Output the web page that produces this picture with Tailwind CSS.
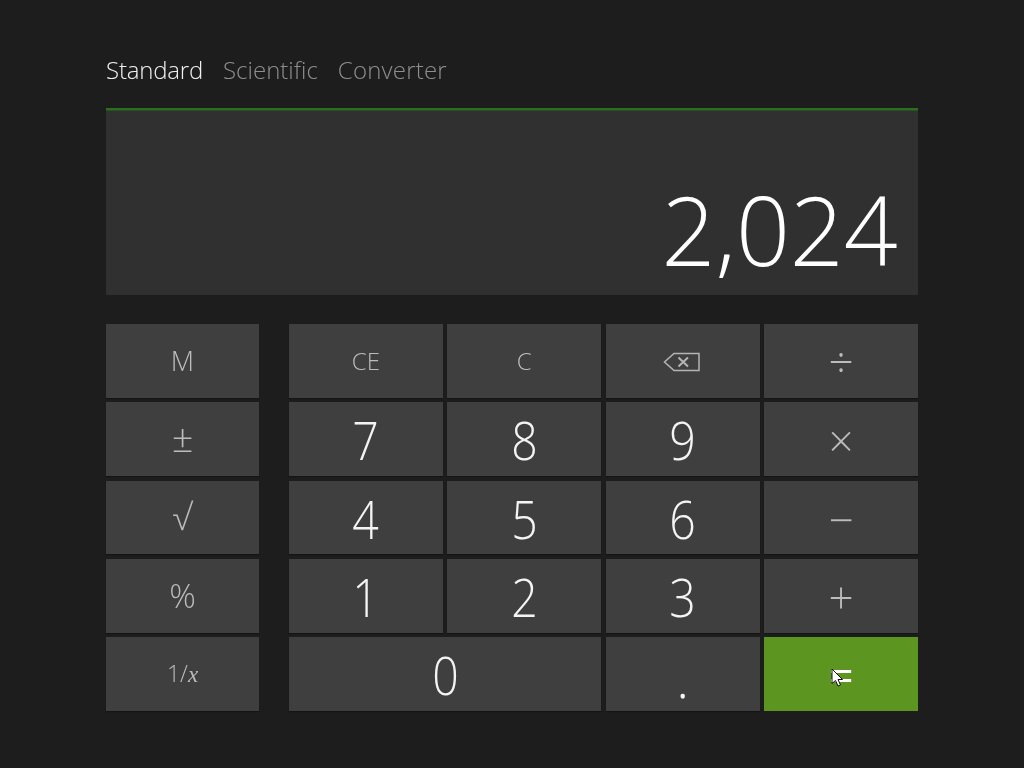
<!DOCTYPE html>
<html>
<head>
<meta charset="utf-8">
<script src="https://cdn.jsdelivr.net/npm/@tailwindcss/browser@4"></script>
</head>
<body class="bg-[#1d1d1d] font-['Open_Sans','Noto_Sans',sans-serif] font-light antialiased">
<div class="w-[1024px] h-[768px] overflow-hidden px-[106px] pt-[53px] will-change-transform">
    <!-- Tabs -->
    <div class="flex gap-[20px] h-[55px] text-[24px] leading-[34px] text-[#8e8e8e]">
        <span class="text-[#f0f0f0] tracking-[-0.2px]">Standard</span>
        <span>Scientific</span>
        <span class="tracking-[0.2px]">Converter</span>
    </div>

    <!-- Display -->
    <div class="h-[187px] bg-[#303030] border-t-2 border-[#27711a] shadow-[inset_0_1px_0_#2f4a2b] flex items-end justify-end pr-[20px] pb-[6px]">
        <span class="text-[96px] leading-[120px] text-white inline-block origin-right scale-x-[0.985]">2,024</span>
    </div>

    <!-- Keypad -->
    <div class="flex gap-[30px] mt-[29px]">
        <div class="w-[153px] h-[387px] grid grid-rows-5 gap-[4.5px] text-[#bcbcbc]">
            <button class="bg-[#3f3f3f] shadow-[0_1px_1px_#141414] text-[27px] font-[350]">M</button>
            <button class="bg-[#3f3f3f] shadow-[0_1px_1px_#141414] text-[38px]"><span class="inline-block -translate-y-[2px]">±</span></button>
            <button class="bg-[#3f3f3f] shadow-[0_1px_1px_#141414] text-[36px]">√</button>
            <button class="bg-[#3f3f3f] shadow-[0_1px_1px_#141414] text-[33px]">%</button>
            <button class="bg-[#3f3f3f] shadow-[0_1px_1px_#141414] text-[23px]">1/<i class="font-['Liberation_Serif',serif]">x</i></button>
        </div>
        <div class="w-[629px] h-[387px] grid grid-cols-4 grid-rows-5 gap-x-[4.6px] gap-y-[4.5px] text-[54px] text-[#f4f4f4]">
            <button class="bg-[#3f3f3f] shadow-[0_1px_1px_#141414] text-[24px] font-[350] text-[#bcbcbc]">CE</button>
            <button class="bg-[#3f3f3f] shadow-[0_1px_1px_#141414] text-[24px] font-[350] text-[#bcbcbc]">C</button>
            <button class="bg-[#3f3f3f] shadow-[0_1px_1px_#141414] flex items-center justify-center">
                <svg class="-translate-x-px translate-y-px" width="37" height="20" viewBox="0 0 37 20" fill="none" stroke="#b4b4b4">
                    <path d="M36 1.500H11L1.500 10L11 18.500H36Z" stroke-width="1.500"/>
                    <path d="M15.500 5.500L25 14.500M25 5.500L15.500 14.500" stroke-width="2"/>
                </svg>
            </button>
            <button class="bg-[#3f3f3f] shadow-[0_1px_1px_#141414] text-[44px] text-[#bcbcbc]">÷</button>

            <button class="bg-[#3f3f3f] shadow-[0_1px_1px_#141414]"><span class="inline-block -translate-y-[3px] scale-x-[0.86]">7</span></button>
            <button class="bg-[#3f3f3f] shadow-[0_1px_1px_#141414]"><span class="inline-block -translate-y-[3px] scale-x-[0.86]">8</span></button>
            <button class="bg-[#3f3f3f] shadow-[0_1px_1px_#141414]"><span class="inline-block -translate-y-[3px] scale-x-[0.86]">9</span></button>
            <button class="bg-[#3f3f3f] shadow-[0_1px_1px_#141414] text-[44px] text-[#bcbcbc]"><span class="inline-block translate-y-px">×</span></button>

            <button class="bg-[#3f3f3f] shadow-[0_1px_1px_#141414]"><span class="inline-block -translate-y-[3px] scale-x-[0.86]">4</span></button>
            <button class="bg-[#3f3f3f] shadow-[0_1px_1px_#141414]"><span class="inline-block -translate-y-[3px] scale-x-[0.86]">5</span></button>
            <button class="bg-[#3f3f3f] shadow-[0_1px_1px_#141414]"><span class="inline-block -translate-y-[3px] scale-x-[0.86]">6</span></button>
            <button class="bg-[#3f3f3f] shadow-[0_1px_1px_#141414] text-[44px] text-[#bcbcbc]"><span class="inline-block translate-y-[2px]">−</span></button>

            <button class="bg-[#3f3f3f] shadow-[0_1px_1px_#141414]"><span class="inline-block -translate-y-[3px] scale-x-[0.86]">1</span></button>
            <button class="bg-[#3f3f3f] shadow-[0_1px_1px_#141414]"><span class="inline-block -translate-y-[3px] scale-x-[0.86]">2</span></button>
            <button class="bg-[#3f3f3f] shadow-[0_1px_1px_#141414]"><span class="inline-block -translate-y-[3px] scale-x-[0.86]">3</span></button>
            <button class="bg-[#3f3f3f] shadow-[0_1px_1px_#141414] text-[44px] text-[#bcbcbc]"><span class="inline-block translate-y-px">+</span></button>

            <button class="col-span-2 bg-[#3f3f3f] shadow-[0_1px_1px_#141414]"><span class="inline-block -translate-y-[3px] scale-x-[0.86]">0</span></button>
            <button class="bg-[#3f3f3f] shadow-[0_1px_1px_#141414]">.</button>
            <button class="relative bg-[#5c9520] text-[44px] font-normal text-white">
                <span class="inline-block translate-y-px">=</span>
                <svg class="absolute left-[67px] top-[31px]" width="12" height="19" viewBox="0 0 12 19">
                    <path d="M1 1V15.500L4.500 12.500L7 18L9.500 17L7 11.500H11.500Z" fill="#fff" stroke="#111" stroke-width="1"/>
                </svg>
            </button>
        </div>
    </div>
</div>
</body>
</html>
